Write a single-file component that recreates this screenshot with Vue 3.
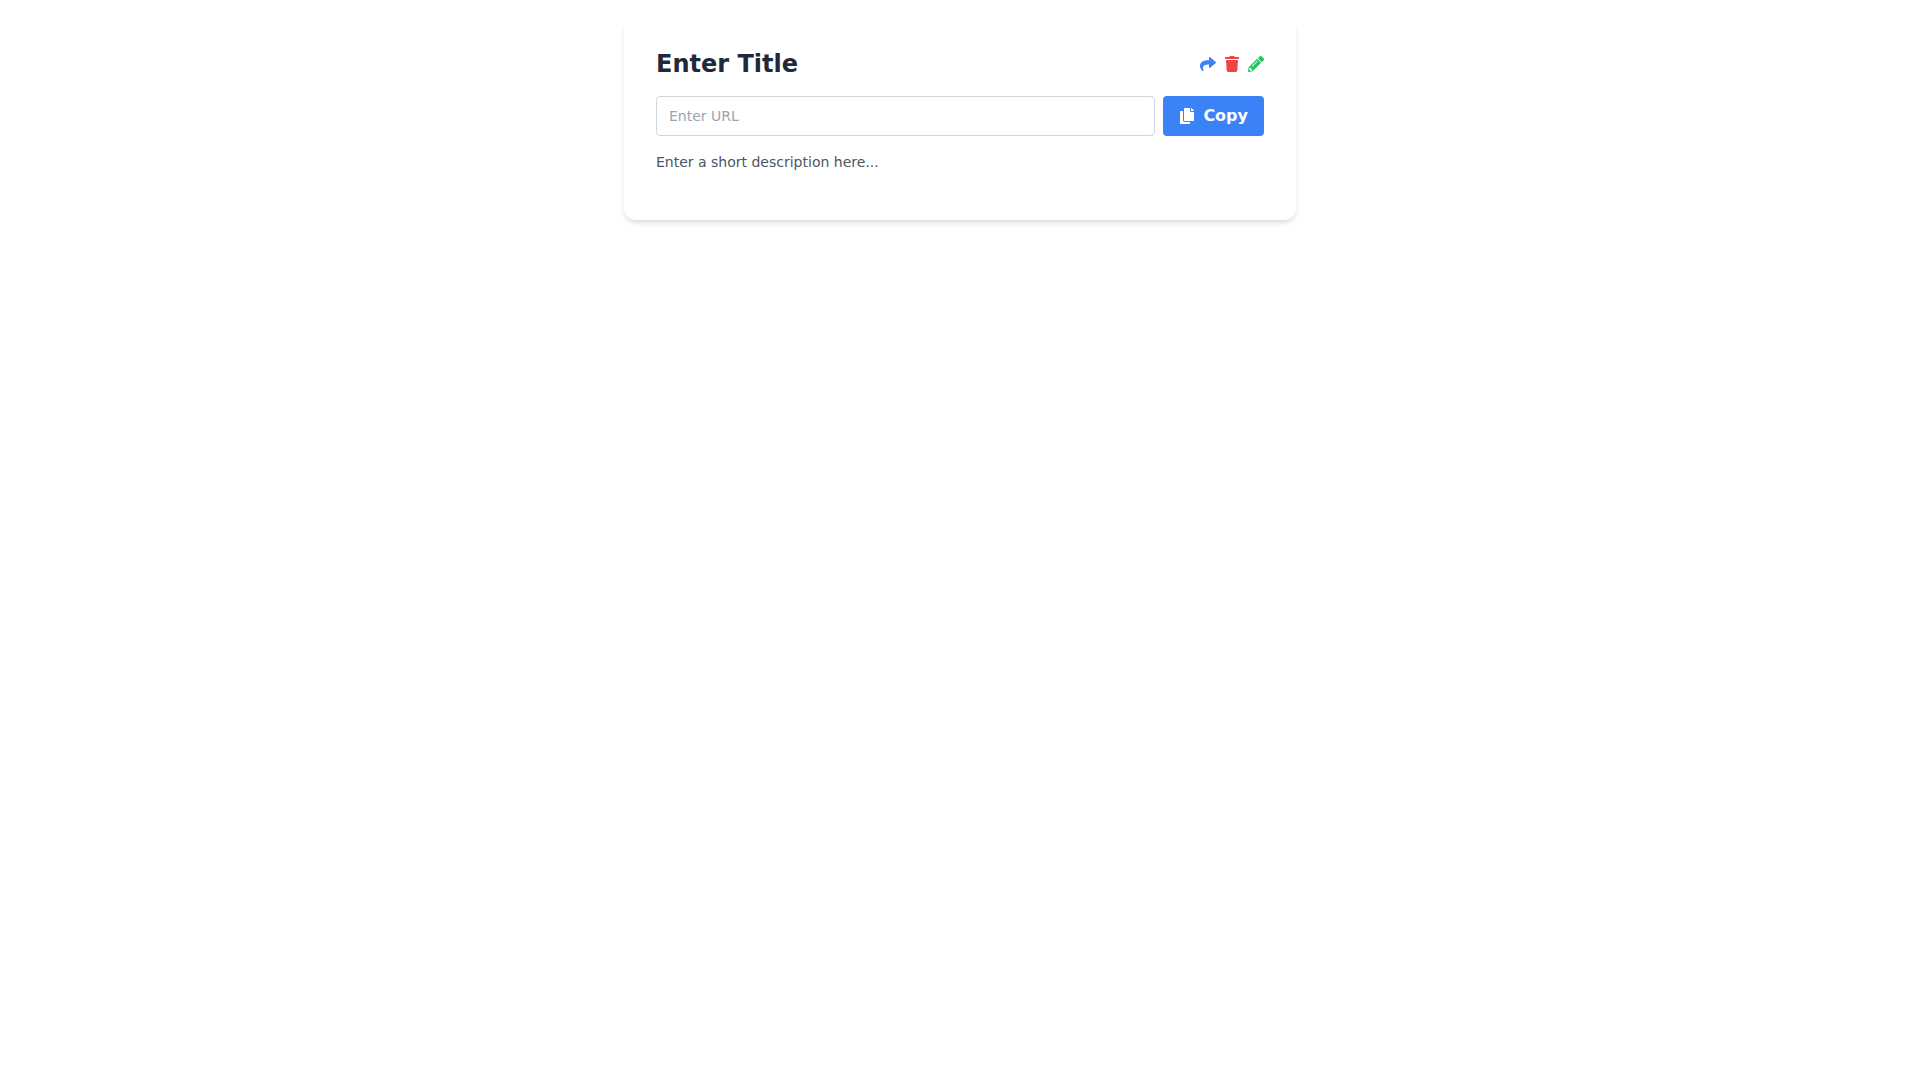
<template>
  <main class="page">
    <section class="link-card">
      <header class="card-header">
        <h2>{{ title }}</h2>

        <div class="card-actions">
          <button type="button" class="icon-btn share" aria-label="Share" @click="shareLink">
            <svg class="icon" viewBox="0 0 512 512" aria-hidden="true">
              <path d="M503.691 189.836L327.687 37.851C312.281 24.546 288 35.347 288 56.015v80.053C127.371 137.907 0 170.1 0 322.326c0 61.441 39.581 122.309 83.333 154.132 13.653 9.931 33.111-2.533 28.077-18.631C66.066 312.814 132.917 274.316 288 272.085V360c0 20.7 24.3 31.453 39.687 18.164l176.004-152c11.071-9.562 11.086-26.753 0-36.328z" />
            </svg>
          </button>
          <button type="button" class="icon-btn delete" aria-label="Delete" @click="clearLink">
            <svg class="icon" viewBox="0 0 448 512" aria-hidden="true">
              <path d="M432 32H312l-9.4-18.7A24 24 0 0 0 281.1 0H166.8a23.72 23.72 0 0 0-21.4 13.3L136 32H16A16 16 0 0 0 0 48v32a16 16 0 0 0 16 16h416a16 16 0 0 0 16-16V48a16 16 0 0 0-16-16zM53.2 467a48 48 0 0 0 47.9 45h245.8a48 48 0 0 0 47.9-45L416 128H32z" />
            </svg>
          </button>
          <button type="button" class="icon-btn edit" aria-label="Edit" @click="urlInput.focus()">
            <svg class="icon" viewBox="0 0 512 512" aria-hidden="true">
              <path d="M497.9 142.1l-46.1 46.1c-4.7 4.7-12.3 4.7-17 0l-111-111c-4.7-4.7-4.7-12.3 0-17l46.1-46.1c18.7-18.7 49.1-18.7 67.9 0l60.1 60.1c18.8 18.7 18.8 49.1 0 67.9zM284.2 99.8L21.6 362.4.4 483.9c-2.9 16.4 11.4 30.6 27.8 27.8l121.5-21.3 262.6-262.6c4.7-4.7 4.7-12.3 0-17l-111-111c-4.8-4.7-12.4-4.7-17.1 0zM124.1 339.9c-5.5-5.5-5.5-14.3 0-19.8l154-154c5.5-5.5 14.3-5.5 19.8 0s5.5 14.3 0 19.8l-154 154c-5.5 5.5-14.3 5.5-19.8 0zM88 424h48v36.3l-64.5 11.3-31.1-31.1L51.7 376H88v48z" />
            </svg>
          </button>
        </div>
      </header>

      <div class="url-row">
        <input
          ref="urlInput"
          v-model="url"
          type="text"
          class="url-input"
          placeholder="Enter URL"
          aria-label="URL"
        />
        <button type="button" class="copy-btn" @click="copyUrl">
          <svg class="icon" viewBox="0 0 448 512" aria-hidden="true">
            <path d="M320 448v40c0 13.255-10.745 24-24 24H24c-13.255 0-24-10.745-24-24V120c0-13.255 10.745-24 24-24h72v296c0 30.879 25.121 56 56 56h168zm0-344V0H152c-13.255 0-24 10.745-24 24v368c0 13.255 10.745 24 24 24h272c13.255 0 24-10.745 24-24V128H344c-13.2 0-24-10.8-24-24zm120.971-31.029L375.029 7.029A24 24 0 0 0 358.059 0H352v96h96v-6.059a24 24 0 0 0-7.029-16.97z" />
          </svg>
          <span>Copy</span>
        </button>
      </div>

      <p class="description">{{ description }}</p>
    </section>
  </main>
</template>

<script setup>
import { ref } from 'vue'

const title = ref('Enter Title')
const url = ref('')
const description = ref('Enter a short description here...')
const urlInput = ref(null)

async function copyUrl() {
  if (!url.value) return
  await navigator.clipboard?.writeText(url.value)
}

async function shareLink() {
  if (!url.value || !navigator.share) return
  await navigator.share({ title: title.value, url: url.value })
}

function clearLink() {
  url.value = ''
}
</script>

<style>
body {
  margin: 0;
  background: #ffffff;
}
</style>

<style scoped>
.page {
  padding: 16px;
  font-family: "DejaVu Sans", sans-serif;
  font-size: 16px;
  line-height: 24px;
}

.link-card {
  box-sizing: border-box;
  max-width: 672px;
  margin: 0 auto;
  padding: 32px;
  background: #ffffff;
  border-radius: 12px;
  box-shadow: 0 4px 6px -1px rgba(0, 0, 0, 0.1), 0 2px 4px -2px rgba(0, 0, 0, 0.1);
}

.card-header {
  display: flex;
  justify-content: space-between;
  align-items: center;
  margin-bottom: 16px;
}

.card-header h2 {
  margin: 0;
  color: #1f2937;
  font-size: 24px;
  font-weight: 700;
  line-height: 32px;
}

.card-actions {
  display: flex;
  gap: 8px;
}

.icon {
  display: block;
  width: 16px;
  height: 16px;
  fill: currentColor;
}

.icon-btn {
  padding: 0;
  border: none;
  background: transparent;
  cursor: pointer;
}

.icon-btn.share {
  color: #3b82f6;
}

.icon-btn.delete {
  color: #ef4444;
}

.icon-btn.edit {
  color: #22c55e;
}

.url-row {
  display: flex;
  gap: 8px;
  margin-bottom: 16px;
}

.url-input {
  box-sizing: border-box;
  flex: 1;
  min-width: 0;
  padding: 8px 12px;
  border: 1px solid #d1d5db;
  border-radius: 4px;
  background: #ffffff;
  color: #374151;
  font-family: inherit;
  font-size: 14px;
  line-height: 20px;
}

.url-input::placeholder {
  color: #9ca3af;
}

.copy-btn {
  display: flex;
  align-items: center;
  gap: 8px;
  padding: 8px 16px;
  border: none;
  border-radius: 4px;
  background: #3b82f6;
  color: #ffffff;
  font-family: inherit;
  font-size: 16px;
  font-weight: 700;
  line-height: 24px;
  cursor: pointer;
}

.description {
  margin: 0 0 16px;
  color: #4b5563;
  font-size: 14px;
  line-height: 20px;
}
</style>
